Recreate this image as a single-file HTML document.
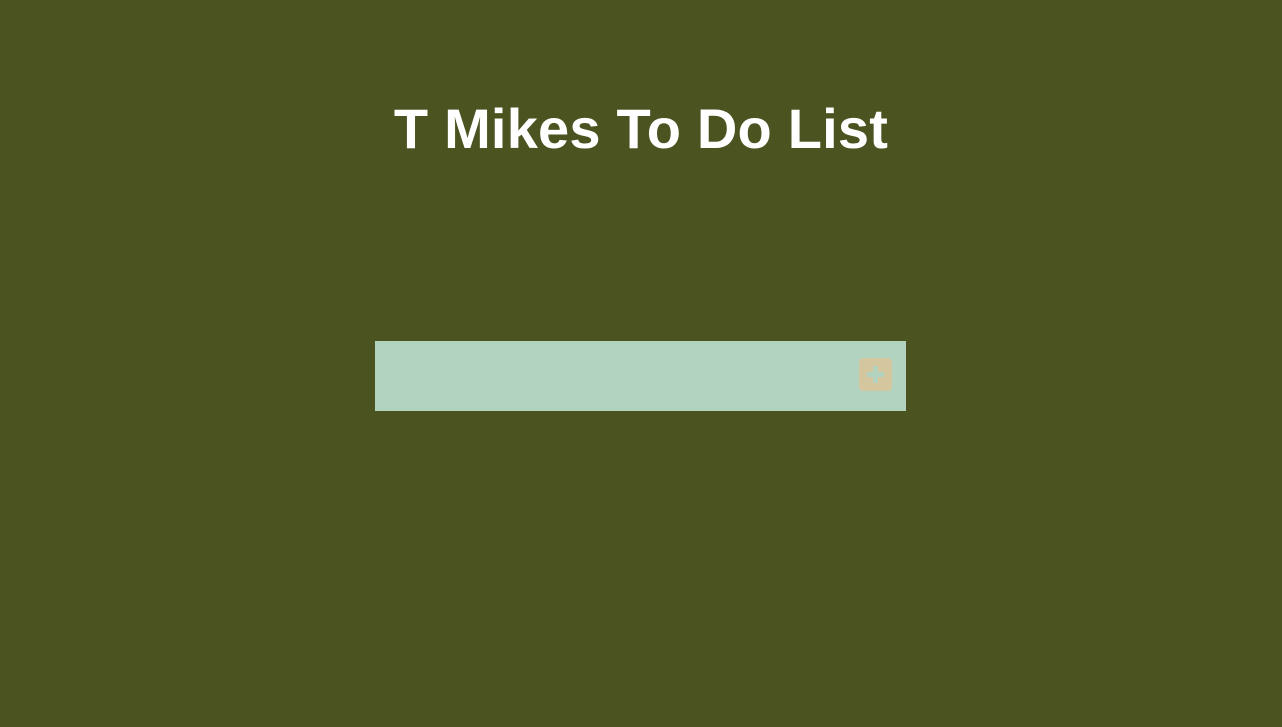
<!DOCTYPE html>
<html><head><style>
html,body{margin:0;padding:0;width:1282px;height:727px;background:#4b5320;overflow:hidden}
h1{position:absolute;left:0;width:1282px;top:97px;margin:0;text-align:center;color:#fff;font:bold 56px/64px "Liberation Sans",sans-serif;letter-spacing:0.2px}
.box{position:absolute;left:375px;top:341px;width:531px;height:70px;background:#b3d3c1}
.btn{position:absolute;left:859px;top:358px;width:33px;height:33px;background:#d4c7a0;border-radius:4px}
.h{position:absolute;left:867px;top:372px;width:17px;height:5px;background:#b3d3c1}
.v{position:absolute;left:873px;top:366px;width:5px;height:17px;background:#b3d3c1}
</style></head><body>
<h1>T Mikes To Do List</h1>
<div class="box"></div>
<div class="btn"></div><div class="h"></div><div class="v"></div>
</body></html>
